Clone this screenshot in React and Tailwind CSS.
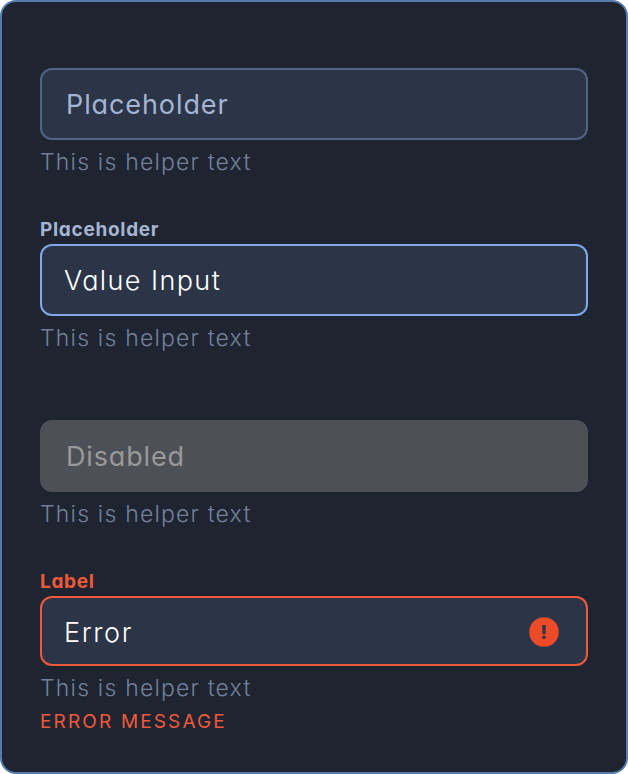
const BOX = 'flex h-[72px] items-center rounded-[12px] border-2 pt-0.5';

function Label({ className = '', children }) {
  return (
    <div className={`h-6 whitespace-nowrap text-[19px] font-[650] leading-[19px] tracking-[0.7px] ${className}`}>
      {children}
    </div>
  );
}

function Helper() {
  return (
    <p className="mt-2 h-7 whitespace-nowrap text-[23px] font-light leading-7 tracking-[1.2px] text-[#73809c]">
      This is helper text
    </p>
  );
}

function ErrorIcon() {
  return (
    <svg className="size-[30px]" viewBox="0 0 30 30" aria-hidden="true">
      <circle cx="15" cy="15" r="14.8" fill="#ec4b27" />
      <path d="M13.2 8h3.6l-.3 9.2h-3z" fill="#2b3547" />
      <circle cx="15" cy="20.3" r="1.8" fill="#2b3547" />
    </svg>
  );
}

export default function App() {
  return (
    <main className="flex h-[774px] w-[628px] flex-col rounded-[16px] border-2 border-[#567bad] bg-[#1e2530] px-[38px] pt-[42px] font-['Inter',sans-serif] [font-feature-settings:'cv11']">
      <section className="h-[176px]">
        <Label />
        <div className={`${BOX} border-[#526486] bg-[#2b3547] pl-6 text-[27px] font-[370] tracking-[0.9px] text-[#a5b4d3]`}>
          <span>Placeholder</span>
        </div>
        <Helper />
      </section>
      <section className="h-[176px]">
        <Label className="text-[#a5b4d3]">Placeholder</Label>
        <div className={`${BOX} border-[#7fa8e8] bg-[#2b3547] pl-[22px] text-[27px] font-light tracking-[1.4px] text-white`}>
          <span>Value Input</span>
        </div>
        <Helper />
      </section>
      <section className="h-[176px]">
        <Label />
        <div className={`${BOX} border-[#4e5057] bg-[#4e5057] pl-6 text-[27px] font-[370] tracking-[0.85px] text-[#999999]`}>
          <span>Disabled</span>
        </div>
        <Helper />
      </section>
      <section>
        <Label className="text-[#f0583a]">Label</Label>
        <div className="flex h-[70px] items-center justify-between rounded-[12px] border-2 border-[#f0583a] bg-[#2b3547] pl-[22px] pr-[27px] pt-0.5 text-[27px] font-light tracking-[1.6px] text-white">
          <span className="pt-0.5">Error</span>
          <ErrorIcon />
        </div>
        <Helper />
        <p className="mt-2 whitespace-nowrap text-[19px] leading-6 tracking-[2.15px] text-[#f0583a]">ERROR MESSAGE</p>
      </section>
    </main>
  );
}
